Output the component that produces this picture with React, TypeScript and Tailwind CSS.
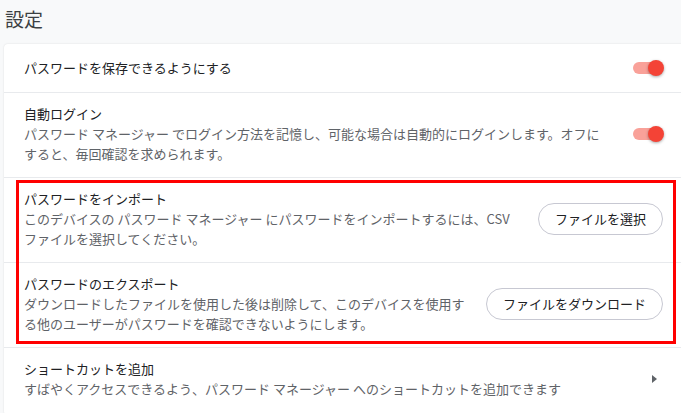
function Toggle() {
  return (
    <div className="relative h-4 w-[31px] shrink-0">
      <div className="absolute left-0 top-[2px] h-[12px] w-[27px] rounded-full bg-[#f9a199]" />
      <div className="absolute right-0 top-0 h-4 w-4 rounded-full bg-[#f44336] shadow-[0_1px_3px_rgba(0,0,0,0.35)]" />
    </div>
  );
}

function PillButton({ label }: { label: string }) {
  return (
    <button className="h-[32px] shrink-0 rounded-full border border-[#c7c8d2] bg-white px-4 text-[13px] text-[#202124]">
      {label}
    </button>
  );
}

export default function App() {
  return (
    <div className="h-[413px] w-[681px] overflow-hidden bg-[#f8f9fa] text-[13px] leading-[20px] text-[#202124] [font-family:'Noto_Sans_CJK_JP','Noto_Sans',sans-serif]">
      <h1 className="h-[44px] pl-[5px] pt-[6px] text-[19px] leading-[26px] font-normal text-[#3c4043]">設定</h1>

      <div className="ml-[4px] w-[690px] rounded-[4px] bg-white shadow-[0_0_2px_rgba(0,0,0,0.12)]">
        {/* save passwords */}
        <div className="flex h-[49px] items-center justify-between border-b border-[#e8eaed] pl-[20px] pr-[30px]">
          <span>パスワードを保存できるようにする</span>
          <Toggle />
        </div>

        {/* auto login */}
        <div className="flex items-center justify-between gap-6 border-b border-[#e8eaed] pb-[13px] pl-[20px] pr-[30px] pt-[11px]">
          <div className="whitespace-nowrap">
            <div>自動ログイン</div>
            <div className="text-[#5f6368]">
              パスワード マネージャー でログイン方法を記憶し、可能な場合は自動的にログインします。オフに
              <br />
              すると、毎回確認を求められます。
            </div>
          </div>
          <Toggle />
        </div>

        <div className="relative">
          {/* import */}
          <div className="flex items-center justify-between gap-6 border-b border-[#e8eaed] pb-[13px] pl-[20px] pr-[31px] pt-[11px]">
            <div className="whitespace-nowrap">
              <div>パスワードをインポート</div>
              <div className="text-[#5f6368]">
                このデバイスの パスワード マネージャー にパスワードをインポートするには、CSV
                <br />
                ファイルを選択してください。
              </div>
            </div>
            <PillButton label="ファイルを選択" />
          </div>

          {/* export */}
          <div className="flex items-center justify-between gap-[18px] border-b border-[#e8eaed] pb-[13px] pl-[20px] pr-[31px] pt-[11px]">
            <div className="whitespace-nowrap">
              <div>パスワードのエクスポート</div>
              <div className="text-[#5f6368]">
                ダウンロードしたファイルを使用した後は削除して、このデバイスを使用す
                <br />
                る他のユーザーがパスワードを確認できないようにします。
              </div>
            </div>
            <PillButton label="ファイルをダウンロード" />
          </div>

          <div className="pointer-events-none absolute left-[12px] top-[2px] h-[164px] w-[660px] border-[3px] border-[#ff0000]" />
        </div>

        {/* shortcut */}
        <div className="flex items-center justify-between pb-[16px] pl-[20px] pr-[30px] pt-[11px]">
          <div className="whitespace-nowrap">
            <div>ショートカットを追加</div>
            <div className="text-[#5f6368]">
              すばやくアクセスできるよう、パスワード マネージャー へのショートカットを追加できます
            </div>
          </div>
          <svg width="5" height="8" viewBox="0 0 5 8" className="mr-[7px] shrink-0">
            <path d="M0 0 L5 4 L0 8 Z" fill="#5f6368" />
          </svg>
        </div>
      </div>
    </div>
  );
}
